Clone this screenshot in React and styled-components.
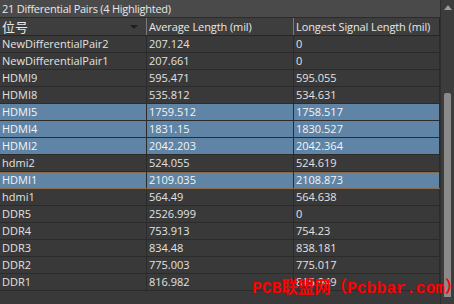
import React from 'react';
import styled, { createGlobalStyle } from 'styled-components';

const GlobalStyle = createGlobalStyle`
  html, body {
    margin: 0;
    padding: 0;
    background: #393939;
  }
  body {
    font-family: "Open Sans", "Noto Sans", "Noto Sans CJK SC", sans-serif;
  }
`;

const pairs = [
  { name: 'NewDifferentialPair2', avg: '207.124', longest: '0' },
  { name: 'NewDifferentialPair1', avg: '207.661', longest: '0' },
  { name: 'HDMI9', avg: '595.471', longest: '595.055' },
  { name: 'HDMI8', avg: '535.812', longest: '534.631' },
  { name: 'HDMI5', avg: '1759.512', longest: '1758.517', hi: true },
  { name: 'HDMI4', avg: '1831.15', longest: '1830.527', hi: true },
  { name: 'HDMI2', avg: '2042.203', longest: '2042.364', hi: true },
  { name: 'hdmi2', avg: '524.055', longest: '524.619' },
  { name: 'HDMI1', avg: '2109.035', longest: '2108.873', hi: true, focus: true },
  { name: 'hdmi1', avg: '564.49', longest: '564.638' },
  { name: 'DDR5', avg: '2526.999', longest: '0' },
  { name: 'DDR4', avg: '753.913', longest: '754.23' },
  { name: 'DDR3', avg: '834.48', longest: '838.181' },
  { name: 'DDR2', avg: '775.003', longest: '775.017' },
  { name: 'DDR1', avg: '816.982', longest: '815.949' },
];

const App = () => {
  return (
    <>
      <GlobalStyle />
      <Panel>
        <Table>
          <TitleBar>21 Differential Pairs (4 Highlighted)</TitleBar>
          <HeaderRow>
            <HeaderCell>
              <CjkLabel>位号</CjkLabel>
              <SortArrow />
            </HeaderCell>
            <HeaderCell sep>Average Length (mil)</HeaderCell>
            <HeaderCell sep last>Longest Signal Length (mil)</HeaderCell>
          </HeaderRow>
          {pairs.map(p => (
            <Row key={p.name} $hi={p.hi} $focus={p.focus}>
              <Cell>{p.name}</Cell>
              <Cell>{p.avg}</Cell>
              <Cell>{p.longest}</Cell>
            </Row>
          ))}
        </Table>
        <ScrollBar>
          <UpArrow />
          <Thumb />
        </ScrollBar>
        <Watermark>PCB联盟网（Pcbbar.com）</Watermark>
      </Panel>
    </>
  );
};

const Panel = styled.div`
  position: relative;
  width: 454px;
  height: 304px;
  display: flex;
  overflow: hidden;
  background: #393939;
`;

const Table = styled.div`
  width: 440px;
  display: flex;
  flex-direction: column;
`;

const TitleBar = styled.div`
  height: 17px;
  line-height: 17px;
  padding-left: 2px;
  background: #4a4a4a;
  border-bottom: 1px solid #2c2c2c;
  color: #e8e8e8;
  font-size: 11px;
  letter-spacing: -0.25px;
  white-space: nowrap;
`;

const HeaderRow = styled.div`
  display: grid;
  grid-template-columns: 147px 147px 146px;
  height: 17px;
  background: #3e3e3e;
  border-bottom: 1px solid #262626;
`;

const HeaderCell = styled.div`
  position: relative;
  display: flex;
  align-items: center;
  padding-left: ${p => (p.sep ? '2px' : '2px')};
  color: #e8e8e8;
  font-size: 11px;
  letter-spacing: -0.1px;
  white-space: nowrap;
  overflow: hidden;
  border-left: ${p => (p.sep ? '1px solid #7a7a7a' : 'none')};
  border-right: ${p => (p.last ? '1px solid #262626' : 'none')};
  margin: ${p => (p.sep ? '0 0 0 -1px' : '0')};
`;

const CjkLabel = styled.span`
  font-family: "Noto Sans CJK SC", sans-serif;
  font-size: 13px;
  flex: 1;
`;

const SortArrow = styled.span`
  width: 0;
  height: 0;
  margin-right: 9px;
  border-left: 4px solid transparent;
  border-right: 4px solid transparent;
  border-top: 4px solid #1e1e1e;
`;

const Row = styled.div`
  display: grid;
  grid-template-columns: 147px 147px 146px;
  height: 16px;
  border-bottom: 1px solid ${p => (p.$focus ? '#8a6c4c' : '#2b2b2b')};
  box-shadow: ${p => (p.$focus ? 'inset 0 1px 0 #8a6c4c' : 'none')};
  background: ${p => (p.$hi ? '#5f84a5' : '#393939')};
  color: ${p => (p.$hi ? '#f4f4f4' : '#e2e2e2')};
`;

const Cell = styled.div`
  padding-left: 2px;
  font-size: 11px;
  line-height: 16px;
  white-space: nowrap;
  overflow: hidden;
  border-right: 1px solid #2b2b2b;
`;

const ScrollBar = styled.div`
  position: relative;
  width: 14px;
  background: #3c3c3c;
  border-left: 1px solid #2e2e2e;
`;

const UpArrow = styled.div`
  position: absolute;
  top: 5px;
  left: 3px;
  width: 0;
  height: 0;
  border-left: 4px solid transparent;
  border-right: 4px solid transparent;
  border-bottom: 5px solid #9a9a9a;
`;

const Thumb = styled.div`
  position: absolute;
  top: 93px;
  left: 3px;
  width: 7px;
  height: 204px;
  background: #8a8a8a;
  border-radius: 2px 2px 0 0;
`;

const Watermark = styled.div`
  position: absolute;
  left: 252px;
  top: 278px;
  color: #ff0000;
  font-family: "Liberation Mono", "Noto Sans CJK SC", monospace;
  font-weight: bold;
  font-size: 16.5px;
  line-height: 22px;
  white-space: nowrap;
  letter-spacing: -0.1px;
`;

export default App;
